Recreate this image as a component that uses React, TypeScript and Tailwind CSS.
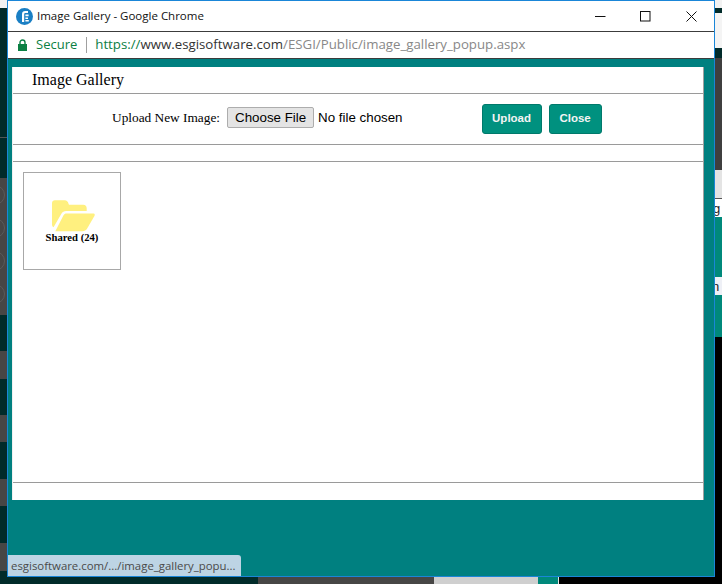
const uiFont = "font-['Open_Sans','Noto_Sans',sans-serif]";

function Strip({ className, children }: { className: string; children?: React.ReactNode }) {
  return <div className={`shrink-0 overflow-hidden ${className}`}>{children}</div>;
}

function Ring() {
  return <div className="h-[20px] w-[20px] shrink-0 -ml-[15px] rounded-full border border-[#5a5a5a]" />;
}

function LeftEdge() {
  return (
    <div className="flex w-[7px] shrink-0 flex-col overflow-hidden">
      <Strip className="h-[8px] bg-[#f2f2f2]" />
      <Strip className="h-[129px] bg-[#012b2a]" />
      <Strip className="h-px bg-[#555555]" />
      <Strip className="h-[40px] bg-[#012b2a]" />
      <Strip className="flex h-[137px] flex-col gap-[13px] bg-[#474645] pt-[7px]">
        <Ring />
        <Ring />
        <Ring />
        <Ring />
      </Strip>
      <Strip className="h-[36px] bg-[#012b2a]" />
      <Strip className="h-[28px] bg-[#474645]" />
      <Strip className="h-[36px] bg-[#012b2a]" />
      <Strip className="h-[27px] bg-[#474645]" />
      <Strip className="h-[37px] bg-[#012b2a]" />
      <Strip className="h-[27px] bg-[#474645]" />
      <Strip className="h-[37px] bg-[#012b2a]" />
      <Strip className="h-[28px] bg-[#474645]" />
      <Strip className="flex-1 bg-[#012b2a]" />
    </div>
  );
}

function RightEdge() {
  return (
    <div className="flex w-[7px] shrink-0 flex-col overflow-hidden font-['Liberation_Sans',sans-serif] text-[13px] leading-[19px] text-[#222222]">
      <Strip className="h-[8px] bg-[#f2f2f2]" />
      <Strip className="h-[5px] bg-[#012b2a]" />
      <Strip className="h-[35px] bg-[#f4f4f4]" />
      <Strip className="h-[10px] bg-[#012b2a]" />
      <Strip className="h-[112px] bg-[#3f3f3f]" />
      <Strip className="h-[28px] bg-[#e4e4e4]" />
      <Strip className="h-px bg-[#555555]" />
      <Strip className="h-[18px] bg-white"><span className="-ml-[2px] block">g</span></Strip>
      <Strip className="h-[60px] bg-[#00897b]" />
      <Strip className="h-[18px] bg-[#eef0f6]"><span className="-ml-[3px] block">n</span></Strip>
      <Strip className="h-[42px] bg-[#00897b]" />
      <Strip className="flex-1 bg-black" />
    </div>
  );
}

function BottomEdge() {
  return (
    <div className="flex h-[7px] shrink-0">
      <div className="w-[258px] bg-[#012b2a]" />
      <div className="w-[176px] bg-[#474645]" />
      <div className="w-[104px] bg-[#cfcfcf]" />
      <div className="w-[21px] border-r border-[#e5e5e5] bg-[#00897b]" />
      <div className="flex-1 bg-black" />
    </div>
  );
}

function SiteLogo() {
  return (
    <svg width="17" height="17" viewBox="0 0 17 17" className="shrink-0">
      <circle cx="8.5" cy="8.5" r="8.5" fill="#1a7fc4" />
      <path d="M6 14V6.2C6 4.2 7.2 3 9.2 3H12V5H9.6C8.7 5 8.2 5.5 8.2 6.4V14Z" fill="#ffffff" />
      <path d="M9.4 6.6H12.6V8.2H9.4ZM9.4 9.4H12V11H9.4ZM9.4 12H12.8V13.6H9.4Z" fill="#ffffff" />
    </svg>
  );
}

function LockIcon() {
  return (
    <svg width="9" height="12" viewBox="0 0 9 12" className="shrink-0">
      <path d="M2 5V3.4C2 2 3.1 1 4.5 1S7 2 7 3.4V5" fill="none" stroke="#0b8043" strokeWidth="1.4" />
      <rect x="0" y="5" width="9" height="7" fill="#0b8043" />
    </svg>
  );
}

function FolderIcon() {
  return (
    <svg width="43" height="32" viewBox="0 0 44 32" className="ml-[2px] shrink-0">
      <path
        d="M0 3C0 1.2 1.2 0 3 0H13C15 0 16.4 1.4 17 3.6L17.4 4.5H32C34.2 4.5 35.5 5.8 35.5 8V11H14.5C12.2 11 10.8 12 9.6 13.8L1.6 27.6C0.6 27 0 26 0 24.4Z"
        fill="#fff07f"
      />
      <path
        d="M14.8 13.5H42C43.6 13.5 44.2 14.6 43.4 16L36 28.8C34.8 30.8 33.4 31.5 31 31.5H3.4L11.8 15.2C12.6 14 13.4 13.5 14.8 13.5Z"
        fill="#fff07f"
      />
    </svg>
  );
}

function WindowControls() {
  return (
    <div className="ml-auto flex h-full items-center">
      <div className="flex w-[45px] justify-center">
        <svg width="11" height="11" viewBox="0 0 11 11"><path d="M0 5.5H10.5" stroke="#111111" /></svg>
      </div>
      <div className="flex w-[45px] justify-center">
        <svg width="11" height="11" viewBox="0 0 11 11"><rect x="0.5" y="0.5" width="9.5" height="9.5" fill="none" stroke="#111111" /></svg>
      </div>
      <div className="flex w-[46px] justify-center">
        <svg width="11" height="11" viewBox="0 0 11 11"><path d="M0.5 0.5L10.5 10.5M10.5 0.5L0.5 10.5" stroke="#111111" /></svg>
      </div>
    </div>
  );
}

function GreenButton({ label, width }: { label: string; width: string }) {
  return (
    <button className={`h-[30px] rounded-[3px] border border-[#00796b] bg-[#00917f] font-['Liberation_Sans',sans-serif] text-[11.5px] font-bold text-[#f4f4f4] ${width}`}>
      {label}
    </button>
  );
}

export default function App() {
  return (
    <div className="flex h-[584px] w-[722px] flex-col overflow-hidden bg-black">
      <div className="flex h-[577px] shrink-0">
        <LeftEdge />
        <div className="relative flex w-[708px] shrink-0 flex-col border border-[#1a86d8] bg-[#008080]">
          <div className="flex h-[30px] shrink-0 items-center bg-white pl-[8px]">
            <SiteLogo />
            <span className={`ml-[4px] text-[11.5px] text-[#111111] ${uiFont}`}>Image Gallery - Google Chrome</span>
            <WindowControls />
          </div>
          <div className={`flex h-[28px] shrink-0 items-center border-y border-[#3c3c3c] bg-white pl-[10px] ${uiFont}`}>
            <LockIcon />
            <span className="mb-px ml-[9px] text-[13px] text-[#0b8043]">Secure</span>
            <div className="ml-[9px] h-[16px] w-px bg-[#a0a0a0]" />
            <span className="mb-px ml-[8px] text-[13.25px] text-[#888888]">
              <span className="text-[#0b8043]">https://</span>
              <span className="text-[#333333]">www.esgisoftware.com</span>
              /ESGI/Public/image_gallery_popup.aspx
            </span>
          </div>
          <div className="mx-[4px] mb-[76px] mr-[10px] mt-[8px] flex flex-1 flex-col border-x border-x-[#f0f0f0] border-r-[#a0a0a0] bg-white font-['Liberation_Serif',serif] text-black">
            <div className="flex h-[27px] shrink-0 items-center border-b border-[#9a9a9a] pl-[19px] text-[16px]">Image Gallery</div>
            <div className="flex h-[51px] shrink-0 items-center border-b border-[#9a9a9a] pl-[99px]">
              <div className="mb-[3px] flex items-center">
                <span className="text-[13.33px]">Upload New Image:</span>
                <button className="ml-[7px] h-[21px] w-[87px] rounded-[2px] border border-[#adadad] bg-[#e4e4e4] font-['Liberation_Sans',sans-serif] text-[13.33px] text-black">
                  Choose File
                </button>
                <span className="ml-[4px] font-['Liberation_Sans',sans-serif] text-[13.33px]">No file chosen</span>
              </div>
              <div className="ml-[79px] flex gap-[7px]">
                <GreenButton label="Upload" width="w-[60px]" />
                <GreenButton label="Close" width="w-[53px]" />
              </div>
            </div>
            <div className="h-[17px] shrink-0 border-b border-[#9a9a9a]" />
            <div className="flex-1 border-b border-[#9a9a9a] pl-[10px] pt-[10px]">
              <div className="flex h-[98px] w-[98px] flex-col items-center border border-[#a8a8a8] pt-[27px]">
                <FolderIcon />
                <span className="-mt-[1px] text-[10.67px] font-bold leading-[12px]">Shared (24)</span>
              </div>
            </div>
            <div className="h-[17px] shrink-0" />
          </div>
          <div className={`absolute bottom-0 left-0 flex h-[21px] w-[233px] items-center rounded-tr-[3px] bg-[#bdd4e4] pl-[3px] text-[11.4px] text-[#4a4a4a] ${uiFont}`}>
            esgisoftware.com/.../image_gallery_popu...
          </div>
        </div>
        <RightEdge />
      </div>
      <BottomEdge />
    </div>
  );
}
